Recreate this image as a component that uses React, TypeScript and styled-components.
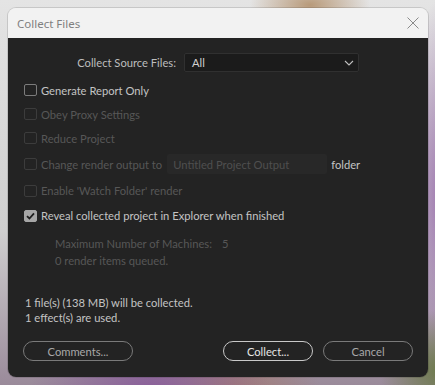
import React from "react";
import styled, { createGlobalStyle } from "styled-components";

const Global = createGlobalStyle`
  html, body { margin: 0; padding: 0; }
  body { font-family: Lato, "Noto Sans", sans-serif; }
`;

const Desktop = styled.div`
  width: 435px;
  height: 385px;
  box-sizing: border-box;
  padding: 8px 7px 8px 8px;
  overflow: hidden;
  background:
    radial-gradient(ellipse 60px 30px at 310px 5px, #b89a7a 0%, rgba(184,154,122,0) 100%),
    radial-gradient(ellipse 120px 60px at 150px 390px, #8a5f9a 0%, rgba(138,95,154,0) 100%),
    radial-gradient(ellipse 90px 50px at 230px 390px, #a37a72 0%, rgba(163,122,114,0) 100%),
    radial-gradient(ellipse 60px 60px at 440px 370px, #6c7a4a 0%, rgba(108,122,74,0) 100%),
    radial-gradient(ellipse 40px 200px at 440px 200px, #a07ab0 0%, rgba(160,122,176,0) 100%),
    linear-gradient(180deg, #e4e4e4 0%, #cfcfcf 60%, #9a8a9a 100%);
`;

const Window = styled.div`
  width: 420px;
  height: 369px;
  border-radius: 8px;
  overflow: hidden;
  display: flex;
  flex-direction: column;
  box-shadow: 0 0 0 1px rgba(0,0,0,0.12);
`;

const TitleBar = styled.div`
  height: 30px;
  flex: none;
  background: #f2f2f2;
  display: flex;
  align-items: center;
  justify-content: space-between;
  padding: 0 9px 0 9px;
`;

const Title = styled.span`
  font-family: "Noto Sans", sans-serif;
  font-size: 11.5px;
  color: #808080;
`;

const Body = styled.div`
  flex: 1;
  background: #232323;
  padding: 15px 15px 16px 16px;
  display: flex;
  flex-direction: column;
  font-family: Lato, "Noto Sans", sans-serif;
  font-size: 11.2px;
`;

const SourceRow = styled.div`
  display: flex;
  align-items: center;
  height: 19px;
  margin-bottom: 6px;
`;

const Label = styled.span`
  width: 152px;
  text-align: right;
  color: #bdbdbd;
`;

const Select = styled.div`
  margin-left: 8px;
  width: 175px;
  height: 19px;
  box-sizing: border-box;
  background: #1b1b1b;
  border: 1px solid #303030;
  border-radius: 2px;
  display: flex;
  align-items: center;
  justify-content: space-between;
  padding: 0 4px 0 7px;
  color: #d0d0d0;
`;

const Row = styled.div<{ $h?: number }>`
  display: flex;
  align-items: center;
  height: ${(p) => p.$h ?? 24}px;
`;

const Box = styled.span<{ $disabled?: boolean; $checked?: boolean }>`
  width: 13px;
  height: 12px;
  flex: none;
  box-sizing: border-box;
  border-radius: 2px;
  margin-right: 4px;
  border: 1.5px solid ${(p) => (p.$disabled ? "#3c3c3c" : "#7c7c7c")};
  background: ${(p) => (p.$checked ? "#a6a6a6" : "transparent")};
  display: flex;
  align-items: center;
  justify-content: center;
  ${(p) => (p.$checked ? "border-color: #a6a6a6;" : "")}
`;

const Text = styled.span<{ $disabled?: boolean }>`
  color: ${(p) => (p.$disabled ? "#575757" : "#c4c4c4")};
  white-space: nowrap;
`;

const Field = styled.div`
  margin-left: 5px;
  width: 160px;
  height: 20px;
  box-sizing: border-box;
  background: #282828;
  border-radius: 2px;
  display: flex;
  align-items: center;
  padding-left: 6px;
  color: #4f4f4f;
`;

const FieldSuffix = styled.span`
  margin-left: 4px;
  color: #c4c4c4;
`;

const Indented = styled.div`
  margin-left: 31px;
  margin-top: 7px;
  display: flex;
  flex-direction: column;
  color: #575757;
`;

const IndentLine = styled.div`
  height: 17px;
  display: flex;
  align-items: center;
  white-space: nowrap;
`;

const Value = styled.span`
  margin-left: 10px;
`;

const Summary = styled.div`
  margin-top: auto;
  margin-left: 1px;
  display: flex;
  flex-direction: column;
  color: #c4c4c4;
`;

const SummaryLine = styled.div`
  height: 15px;
  display: flex;
  align-items: center;
`;

const Footer = styled.div`
  margin-top: 16px;
  margin-left: -1px;
  display: flex;
  align-items: center;
`;

const Button = styled.button<{ $w: number; $primary?: boolean }>`
  width: ${(p) => p.$w}px;
  height: 20px;
  box-sizing: border-box;
  border-radius: 10px;
  border: 1px solid ${(p) => (p.$primary ? "#c8c8c8" : "#7a7a7a")};
  background: transparent;
  color: ${(p) => (p.$primary ? "#e6e6e6" : "#a8a8a8")};
  font-family: Lato, "Noto Sans", sans-serif;
  font-size: 11.2px;
  padding: 0;
  display: flex;
  align-items: center;
  justify-content: center;
`;

const Spacer = styled.div`
  flex: 1;
`;

const Gap = styled.div`
  width: 10px;
`;

const Check = () => (
  <svg width="9" height="8" viewBox="0 0 9 8">
    <path d="M1 4.2 L3.4 6.5 L8 1.3" fill="none" stroke="#1e1e1e" strokeWidth="1.8" />
  </svg>
);

const Chevron = () => (
  <svg width="10" height="6" viewBox="0 0 10 6">
    <path d="M1 1 L5 5 L9 1" fill="none" stroke="#bdbdbd" strokeWidth="1.1" />
  </svg>
);

const Close = () => (
  <svg width="12" height="12" viewBox="0 0 12 12">
    <path d="M0.5 0.5 L11.5 11.5 M11.5 0.5 L0.5 11.5" stroke="#8a8a8a" strokeWidth="1" />
  </svg>
);

export default function App() {
  return (
    <Desktop>
      <Global />
      <Window>
        <TitleBar>
          <Title>Collect Files</Title>
          <Close />
        </TitleBar>
        <Body>
          <SourceRow>
            <Label>Collect Source Files:</Label>
            <Select>
              <span>All</span>
              <Chevron />
            </Select>
          </SourceRow>
          <Row>
            <Box />
            <Text>Generate Report Only</Text>
          </Row>
          <Row>
            <Box $disabled />
            <Text $disabled>Obey Proxy Settings</Text>
          </Row>
          <Row>
            <Box $disabled />
            <Text $disabled>Reduce Project</Text>
          </Row>
          <Row $h={28}>
            <Box $disabled />
            <Text $disabled>Change render output to</Text>
            <Field>Untitled Project Output</Field>
            <FieldSuffix>folder</FieldSuffix>
          </Row>
          <Row $h={25}>
            <Box $disabled />
            <Text $disabled>Enable 'Watch Folder' render</Text>
          </Row>
          <Row $h={25}>
            <Box $checked>
              <Check />
            </Box>
            <Text>Reveal collected project in Explorer when finished</Text>
          </Row>
          <Indented>
            <IndentLine>
              Maximum Number of Machines:<Value>5</Value>
            </IndentLine>
            <IndentLine>0 render items queued.</IndentLine>
          </Indented>
          <Summary>
            <SummaryLine>1 file(s) (138 MB) will be collected.</SummaryLine>
            <SummaryLine>1 effect(s) are used.</SummaryLine>
          </Summary>
          <Footer>
            <Button $w={110}>Comments...</Button>
            <Spacer />
            <Button $w={90} $primary>Collect...</Button>
            <Gap />
            <Button $w={90}>Cancel</Button>
          </Footer>
        </Body>
      </Window>
    </Desktop>
  );
}
